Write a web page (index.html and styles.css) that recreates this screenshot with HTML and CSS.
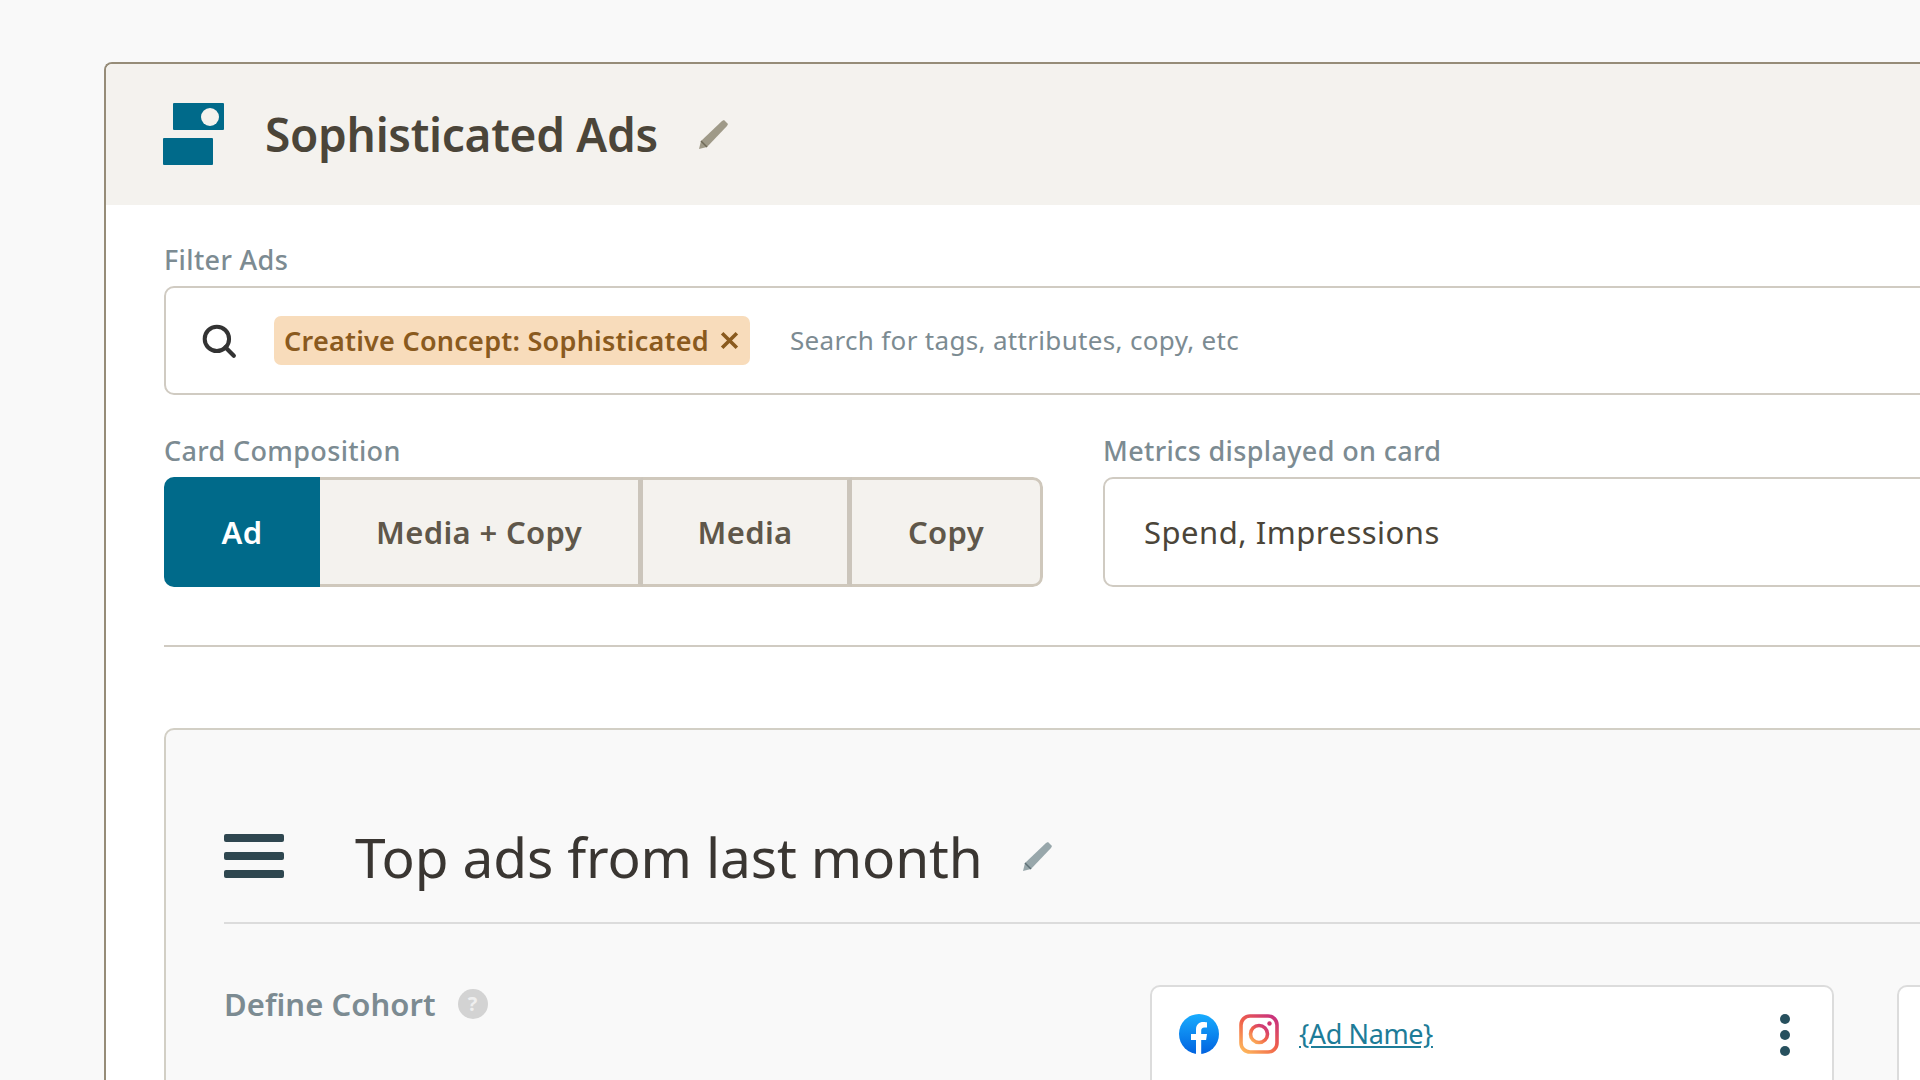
FILE: index.html
```html
<!DOCTYPE html>
<html lang="en">
<head>
<meta charset="utf-8">
<title>Sophisticated Ads</title>
<link rel="stylesheet" href="styles.css">
</head>
<body>
<main class="board">
  <header class="board-head">
    <svg class="logo" viewBox="0 0 61 62" aria-hidden="true"><rect x="10" y="0" width="51" height="27" rx="1" fill="#006a8a"/><circle cx="47" cy="14" r="9" fill="#f4f2ee"/><rect x="0" y="35" width="50" height="27" rx="1" fill="#006a8a"/></svg>
    <h1 class="board-title">Sophisticated Ads</h1>
    <svg class="pencil" viewBox="0 0 32 32" aria-hidden="true"><path d="M1 31l2-8L24 3l2-1 4 4-1 2L9 29z" fill="#9f9a88"/><path d="M3 23l6 6" stroke="#6f6a58" stroke-width="1.500"/></svg>
  </header>
  <div class="board-body">
    <label class="field-label">Filter Ads</label>
    <div class="search-box">
      <svg class="search-icon" viewBox="0 0 34 34" aria-hidden="true"><circle cx="15" cy="15" r="11.500" fill="none" stroke="#333" stroke-width="3.800"/><path d="M23 23l8 8" stroke="#333" stroke-width="4" stroke-linecap="round"/></svg>
      <span class="chip">Creative Concept: Sophisticated<svg class="chip-x" viewBox="0 0 20 20" aria-hidden="true"><path d="M3 3l14 14M17 3L3 17" stroke="#8a5a1e" stroke-width="3.400"/></svg></span>
      <span class="placeholder">Search for tags, attributes, copy, etc</span>
    </div>
    <div class="controls">
      <div class="control">
        <label class="field-label">Card Composition</label>
        <div class="segments">
          <span class="seg seg-ad">Ad</span>
          <span class="seg seg-mc">Media + Copy</span>
          <span class="seg seg-m">Media</span>
          <span class="seg seg-c">Copy</span>
        </div>
      </div>
      <div class="control control-wide">
        <label class="field-label">Metrics displayed on card</label>
        <div class="select">Spend, Impressions</div>
      </div>
    </div>
    <hr class="rule">
    <section class="panel">
      <div class="panel-head">
        <svg class="menu" viewBox="0 0 60 44" aria-hidden="true"><rect y="0" width="60" height="8" rx="2" fill="#2f4750"/><rect y="18" width="60" height="8" rx="2" fill="#2f4750"/><rect y="36" width="60" height="8" rx="2" fill="#2f4750"/></svg>
        <h2 class="panel-title">Top ads from last month</h2>
        <svg class="pencil pencil-2" viewBox="0 0 32 32" aria-hidden="true"><path d="M1 31l2-8L24 3l2-1 4 4-1 2L9 29z" fill="#98a7ab"/><path d="M3 23l6 6" stroke="#5f7076" stroke-width="1.500"/></svg>
      </div>
      <div class="panel-body">
        <div class="cohort"><span class="cohort-label">Define Cohort</span><span class="help">?</span></div>
        <article class="ad-card">
          <svg class="brand" viewBox="0 0 40 40" aria-hidden="true"><defs><linearGradient id="fb" x1="0" y1="0" x2="0" y2="1"><stop offset="0" stop-color="#18acfe"/><stop offset="1" stop-color="#0163e0"/></linearGradient></defs><circle cx="20" cy="20" r="20" fill="url(#fb)"/><path d="M17 40V26h-5v-6h5v-4.500C17 10.500 20 8 24.300 8c2 0 3.700.300 3.700.300V13.500h-2.500c-2.500 0-3.300 1.500-3.300 3.200V20H28l-.9 6h-4.900v14z" fill="#fff"/></svg>
          <svg class="brand" viewBox="0 0 40 40" aria-hidden="true"><defs><linearGradient id="ig" x1="0.100" y1="1" x2="0.900" y2="0"><stop offset="0" stop-color="#fdb45a"/><stop offset="0.500" stop-color="#f0604a"/><stop offset="1" stop-color="#c8327e"/></linearGradient></defs><rect x="2" y="2" width="36" height="36" rx="9" fill="none" stroke="url(#ig)" stroke-width="3.600"/><circle cx="20" cy="20" r="8.500" fill="none" stroke="url(#ig)" stroke-width="3.600"/><circle cx="30.500" cy="9.500" r="2.200" fill="#d1356f"/></svg>
          <a class="ad-name" href="#">{Ad Name}</a>
          <svg class="kebab" viewBox="0 0 10 42" aria-hidden="true"><circle cx="5" cy="5" r="5" fill="#27505e"/><circle cx="5" cy="21" r="5" fill="#27505e"/><circle cx="5" cy="37" r="5" fill="#27505e"/></svg>
        </article>
        <article class="ad-card ad-card-next"></article>
      </div>
    </section>
  </div>
</main>
</body>
</html>
```

FILE: styles.css
```css
* { box-sizing: border-box; }
html, body { margin: 0; height: 100%; overflow: hidden; }
body { background: #f9f9f9; font-family: "Noto Sans", sans-serif; padding: 62px 0 0 104px; }
.board { width: 1816px; height: 1018px; background: #fff; border: 2px solid #968c78; border-bottom: 0; border-right: 0; border-radius: 8px 0 0 0; overflow: hidden; }
.board-head { height: 141px; background: #f4f2ee; display: flex; align-items: center; padding: 0 0 2px 57px; }
.logo { width: 61px; height: 62px; flex: none; }
.board-title { margin: 0 0 0 41px; font-size: 46px; font-weight: 600; color: #4b4539; letter-spacing: -.3px; line-height: 60px; white-space: nowrap; }
.pencil { width: 32px; height: 32px; flex: none; margin: 0 0 0 40px; }
.board-body { padding: 38px 0 0 58px; }
.field-label { display: block; font-size: 27px; line-height: 34px; font-weight: 500; color: #7c8b92; letter-spacing: .35px; margin-bottom: 9px; }
.search-box { height: 109px; width: 1900px; border: 2px solid #d0cbc2; border-radius: 10px; display: flex; align-items: center; padding-left: 35px; }
.search-icon { width: 36px; height: 36px; flex: none; }
.chip { display: flex; align-items: center; height: 49px; margin-left: 37px; padding: 0 10px 1px; background: #f8dcbb; border-radius: 7px; color: #8a5a1e; font-size: 27px; font-weight: 600; letter-spacing: .25px; white-space: nowrap; }
.chip-x { width: 21px; height: 21px; margin-left: 10px; }
.placeholder { margin-left: 40px; padding-bottom: 1px; font-size: 26px; color: #7c8b92; letter-spacing: .33px; white-space: nowrap; }
.controls { display: flex; gap: 61px; margin-top: 39px; }
.control { flex: none; width: 878px; }
.control-wide { width: 1000px; }
.segments { display: flex; height: 110px; width: 879px; border-radius: 10px; overflow: hidden; background: #f4f2ee; }
.seg { display: flex; align-items: center; justify-content: center; font-size: 31px; font-weight: 600; letter-spacing: .35px; color: #5f574a; border-top: 3px solid #cfc8bc; border-bottom: 3px solid #cfc8bc; flex: none; }
.seg-ad { width: 156px; border: 0; background: #006a8a; color: #fff; }
.seg-mc { width: 323px; border-right: 5px solid #cbc5bb; }
.seg-m { width: 209px; border-right: 5px solid #cbc5bb; }
.seg-c { flex: 1; border-right: 3px solid #cfc8bc; border-radius: 0 10px 10px 0; }
.select { height: 110px; border: 2px solid #d0cbc2; border-radius: 10px; display: flex; align-items: center; padding-left: 39px; font-size: 31px; color: #4b4539; letter-spacing: .5px; }
.rule { margin: 58px 0 0; border: 0; height: 2px; background: #d0cbc2; width: 1900px; }
.panel { width: 1900px; height: 400px; margin-top: 81px; background: #f9f9f9; border: 2px solid #d2cfc5; border-radius: 10px; padding: 0 0 0 58px; }
.panel-head { height: 194px; border-bottom: 2px solid #dcdcdc; display: flex; align-items: center; padding-top: 60px; }
.menu { width: 60px; height: 44px; flex: none; }
.panel-title { margin: 0 0 0 71px; padding-top: 2px; font-size: 55px; font-weight: 400; color: #3a3632; letter-spacing: -.15px; line-height: 70px; white-space: nowrap; }
.pencil-2 { margin: 0 0 0 39px; }
.panel-body { display: flex; padding-top: 61px; }
.cohort { flex: none; width: 926px; display: flex; align-items: center; height: 37px; }
.cohort-label { font-size: 31px; font-weight: 600; color: #7c8b92; letter-spacing: .05px; }
.help { width: 30px; height: 30px; border-radius: 50%; background: #d3d3d3; color: #efefef; font-size: 20px; font-weight: 700; display: flex; align-items: center; justify-content: center; margin-left: 22px; }
.ad-card { flex: none; width: 684px; height: 200px; background: #fff; border: 2px solid #dcdcdc; border-radius: 10px; display: flex; align-items: flex-start; padding: 27px 0 0 27px; }
.ad-card-next { margin-left: 63px; }
.brand { width: 40px; height: 40px; flex: none; margin-right: 20px; }
.ad-name { font-size: 27px; line-height: 40px; color: #1d7c98; letter-spacing: -.4px; }
.kebab { width: 10px; height: 42px; margin-left: auto; margin-right: 42px; }
```
